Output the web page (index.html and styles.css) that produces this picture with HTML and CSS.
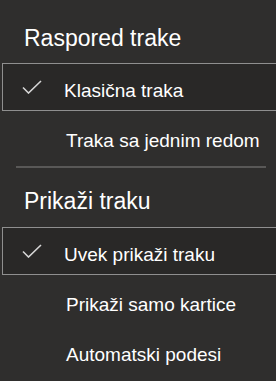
FILE: index.html
```html
<!DOCTYPE html>
<html lang="sr">
<head>
  <meta charset="UTF-8" />
  <meta name="viewport" content="width=device-width, initial-scale=1.0" />
  <title>Raspored trake</title>
  <link rel="stylesheet" href="styles.css">
</head>
<body>
  <div class="menu">
    <!-- Ribbon layout -->
    <div class="group first">
      <div class="group-title">Raspored trake</div>
      <div class="item checked">
        <span class="check">
          <svg width="20" height="14" viewBox="0 0 20 14"><path d="M1 7.5 L6.5 13 L19 1" fill="none" stroke="#d6d6d6" stroke-width="1.6"/></svg>
        </span>
        <span class="label">Klasična traka</span>
      </div>
      <div class="item">
        <span class="check"></span>
        <span class="label">Traka sa jednim redom</span>
      </div>
    </div>

    <div class="divider"></div>

    <!-- Show ribbon -->
    <div class="group second">
      <div class="group-title">Prikaži traku</div>
      <div class="item checked">
        <span class="check">
          <svg width="20" height="14" viewBox="0 0 20 14"><path d="M1 7.5 L6.5 13 L19 1" fill="none" stroke="#d6d6d6" stroke-width="1.6"/></svg>
        </span>
        <span class="label">Uvek prikaži traku</span>
      </div>
      <div class="item">
        <span class="check"></span>
        <span class="label">Prikaži samo kartice</span>
      </div>
      <div class="item">
        <span class="check"></span>
        <span class="label">Automatski podesi</span>
      </div>
    </div>
  </div>
</body>
</html>
```

FILE: styles.css
```css
html, body {
  margin: 0;
  padding: 0;
  background-color: #2f2e2d;
  color: #fff;
  font-family: "Liberation Sans", Arial, sans-serif;
  height: 100%;
  overflow: hidden;
}
.menu {
  width: 276px;
}
.group.first {
  padding-top: 23px;
}
.group-title {
  font-size: 23px;
  line-height: 30px;
  padding-left: 24px;
  margin-bottom: 10px;
}
.group.second .group-title {
  margin-bottom: 11px;
}
.item {
  display: grid;
  grid-template-columns: 61px 1fr;
  align-items: center;
  box-sizing: border-box;
  height: 48px;
  margin-bottom: 2px;
  padding-left: 5px;
  font-size: 19px;
  white-space: nowrap;
}
.item.checked {
  margin-left: 2px;
  padding-left: 0;
  border: 1px solid #8f8f8f;
  border-right: none;
  background-color: #292827;
}
.check {
  display: flex;
  align-items: center;
  padding-left: 19px;
  height: 14px;
}
.label {
  padding-top: 8px;
  line-height: 38px;
}
.divider {
  height: 2px;
  margin: 5px 10px 18px 16px;
  background-color: #595857;
}
```
